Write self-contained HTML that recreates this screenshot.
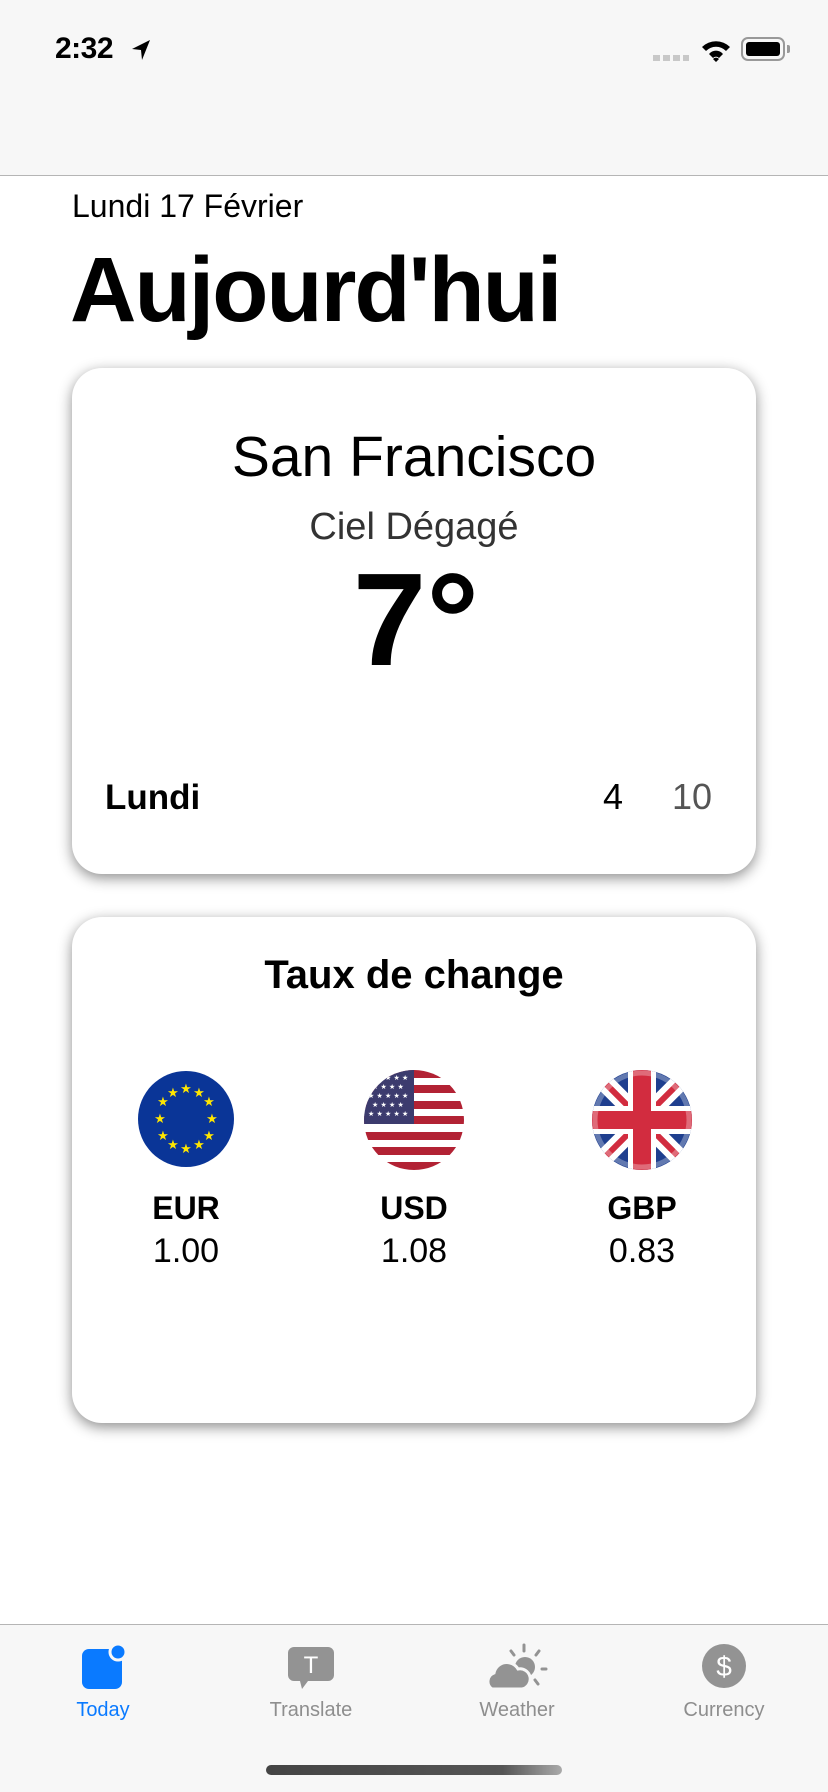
<!DOCTYPE html>
<html><head><meta charset="utf-8"><style>
*{margin:0;padding:0;box-sizing:border-box}
body{width:828px;height:1792px;background:#fff;font-family:"Liberation Sans",sans-serif;position:relative;overflow:hidden;color:#000}
.abs{position:absolute}
.top{left:0;top:0;width:828px;height:176px;background:#f7f7f7;border-bottom:1px solid #b5b5b5}
.card{left:72px;width:684px;height:506px;background:#fff;border-radius:30px;box-shadow:0 4px 14px rgba(0,0,0,.45)}
.c{position:absolute;left:0;width:100%;text-align:center;white-space:nowrap}
.tab{position:absolute;top:1624px;left:0;width:828px;height:168px;background:#f7f7f7;border-top:1px solid #b5b5b5}
.tl{position:absolute;top:74px;width:160px;margin-left:-80px;text-align:center;font-size:20px;color:#8e8e8e}
.ti{position:absolute;top:18px}
</style></head><body>
<div class="abs top">
 <div class="abs" style="left:55px;top:32px;font-size:30px;font-weight:bold;letter-spacing:-0.5px">2:32</div>
 <svg class="abs" style="left:130px;top:38px" width="22" height="24" viewBox="0 0 22 24"><path d="M20 2 L2 11 L11 12 L12 22 Z" fill="#000"/></svg>
 <div class="abs" style="left:653px;top:55px;width:36px;height:6px;background:repeating-linear-gradient(90deg,#c8c8c8 0 7px,transparent 7px 10px)"></div>
 <svg class="abs" style="left:700px;top:38px" width="32" height="26" viewBox="0 0 32 26"><path d="M2 9 A20 20 0 0 1 30 9 L26 13 A14 14 0 0 0 6 13Z M9 16 A9 9 0 0 1 23 16 L19 20 A4 4 0 0 0 13 20Z M16 24 L13 21 A4 4 0 0 1 19 21Z" fill="#000"/></svg>
 <div class="abs" style="left:741px;top:37px;width:44px;height:24px;border:2px solid #999;border-radius:7px;padding:3px"><div style="width:100%;height:100%;background:#000;border-radius:3px"></div></div>
 <div class="abs" style="left:787px;top:45px;width:3px;height:8px;background:#999;border-radius:0 2px 2px 0"></div>
</div>
<div class="abs" style="left:72px;top:188px;font-size:32px">Lundi 17 Février</div>
<div class="abs" style="left:70px;top:244px;font-size:92px;font-weight:900;letter-spacing:-2px;line-height:1">Aujourd'hui</div>

<div class="abs card" style="top:368px">
 <div class="c" style="top:56px;font-size:57px">San Francisco</div>
 <div class="c" style="top:138px;font-size:38px;color:#333">Ciel Dégagé</div>
 <div class="c" style="top:186px;font-size:132px;font-weight:bold;line-height:1;padding-left:4px">7°</div>
 <div class="abs" style="left:33px;top:410px;font-size:35px;font-weight:bold">Lundi</div>
 <div class="abs" style="left:531px;top:408px;font-size:36px">4</div>
 <div class="abs" style="left:600px;top:408px;font-size:36px;color:#555">10</div>
</div>

<div class="abs card" style="top:917px">
 <div class="c" style="top:36px;font-size:40px;font-weight:bold">Taux de change</div>
</div>
<!-- flags -->
<svg class="abs" style="left:137px;top:1070px" width="98" height="98" viewBox="0 0 98 98"><circle cx="49" cy="49" r="48" fill="#0a3597"/>
<g fill="#ffe600" font-size="13" text-anchor="middle" font-family="DejaVu Sans">
<text x="49" y="23">★</text><text x="62" y="27">★</text><text x="72" y="36">★</text><text x="75" y="53">★</text><text x="72" y="70">★</text><text x="62" y="79">★</text><text x="49" y="83">★</text><text x="36" y="79">★</text><text x="26" y="70">★</text><text x="23" y="53">★</text><text x="26" y="36">★</text><text x="36" y="27">★</text></g></svg>
<svg class="abs" style="left:364px;top:1070px" width="100" height="100" viewBox="0 0 100 100"><defs><clipPath id="u"><circle cx="50" cy="50" r="50"/></clipPath></defs>
<g clip-path="url(#u)"><rect width="100" height="100" fill="#fff"/>
<g fill="#b22234"><rect y="0" width="100" height="8"/><rect y="15" width="100" height="8"/><rect y="31" width="100" height="8"/><rect y="46" width="100" height="8"/><rect y="62" width="100" height="8"/><rect y="77" width="100" height="8"/><rect y="92" width="100" height="8"/></g>
<rect width="50" height="54" fill="#3c3b6e"/>
<g fill="#fff" font-size="7" font-family="DejaVu Sans"><text x="4" y="10">★ ★ ★ ★ ★</text><text x="8" y="19">★ ★ ★ ★</text><text x="4" y="28">★ ★ ★ ★ ★</text><text x="8" y="37">★ ★ ★ ★</text><text x="4" y="46">★ ★ ★ ★ ★</text></g></g></svg>
<svg class="abs" style="left:592px;top:1070px" width="100" height="100" viewBox="0 0 100 100"><defs><clipPath id="g"><circle cx="50" cy="50" r="50"/></clipPath></defs>
<g clip-path="url(#g)"><rect width="100" height="100" fill="#1f3f8f"/>
<path d="M0 0 L100 100 M100 0 L0 100" stroke="#fff" stroke-width="18"/>
<path d="M0 0 L100 100 M100 0 L0 100" stroke="#d22c3f" stroke-width="6"/>
<rect x="36" width="28" height="100" fill="#fff"/><rect y="36" width="100" height="28" fill="#fff"/>
<rect x="41" width="18" height="100" fill="#d22c3f"/><rect y="41" width="100" height="18" fill="#d22c3f"/></g>
<circle cx="50" cy="50" r="47" fill="none" stroke="rgba(255,255,255,.3)" stroke-width="5"/></svg>

<div class="abs" style="left:106px;top:1190px;width:160px;text-align:center;font-size:32px;font-weight:bold">EUR</div>
<div class="abs" style="left:106px;top:1232px;width:160px;text-align:center;font-size:34px">1.00</div>
<div class="abs" style="left:334px;top:1190px;width:160px;text-align:center;font-size:32px;font-weight:bold">USD</div>
<div class="abs" style="left:334px;top:1232px;width:160px;text-align:center;font-size:34px">1.08</div>
<div class="abs" style="left:562px;top:1190px;width:160px;text-align:center;font-size:32px;font-weight:bold">GBP</div>
<div class="abs" style="left:562px;top:1232px;width:160px;text-align:center;font-size:34px">0.83</div>

<div class="tab">
 <svg class="ti" style="left:80px" width="48" height="48" viewBox="0 0 48 48"><rect x="2" y="6" width="40" height="40" rx="7" fill="#0a7aff"/><circle cx="38" cy="9" r="8" fill="#0a7aff" stroke="#f7f7f7" stroke-width="3"/></svg>
 <div class="tl" style="left:103px;color:#0a7aff">Today</div>
 <svg class="ti" style="left:286px" width="50" height="50" viewBox="0 0 50 50"><path d="M8 4 H42 A6 6 0 0 1 48 10 V32 A6 6 0 0 1 42 38 H22 L16 46 L14 38 H8 A6 6 0 0 1 2 32 V10 A6 6 0 0 1 8 4Z" fill="#939393"/><text x="25" y="30" text-anchor="middle" font-size="24" fill="#fff" font-family="Liberation Sans">T</text></svg>
 <div class="tl" style="left:311px">Translate</div>
 <svg class="ti" style="left:484px" width="66" height="50" viewBox="0 0 66 50"><g stroke="#939393" stroke-width="3" stroke-linecap="round"><path d="M40 2 V8 M27 8 L30 12 M55 8 L52 12 M58 26 H62 M51 37 L54 41"/></g><circle cx="41" cy="24" r="10" fill="#939393"/><path d="M8 46 A9 9 0 0 1 10 30 A13 13 0 0 1 34 26 A10 10 0 0 1 38 46 Z" fill="#939393" stroke="#f7f7f7" stroke-width="3"/></svg>
 <div class="tl" style="left:517px">Weather</div>
 <svg class="ti" style="left:701px" width="46" height="46" viewBox="0 0 46 46"><circle cx="23" cy="23" r="22" fill="#939393"/><text x="23" y="33" text-anchor="middle" font-size="28" fill="#fff" font-family="Liberation Sans">$</text></svg>
 <div class="tl" style="left:724px">Currency</div>
 <div class="abs" style="left:266px;top:140px;width:296px;height:10px;border-radius:5px;background:linear-gradient(90deg,#444,#555 80%,#aaa)"></div>
</div>
</body></html>
